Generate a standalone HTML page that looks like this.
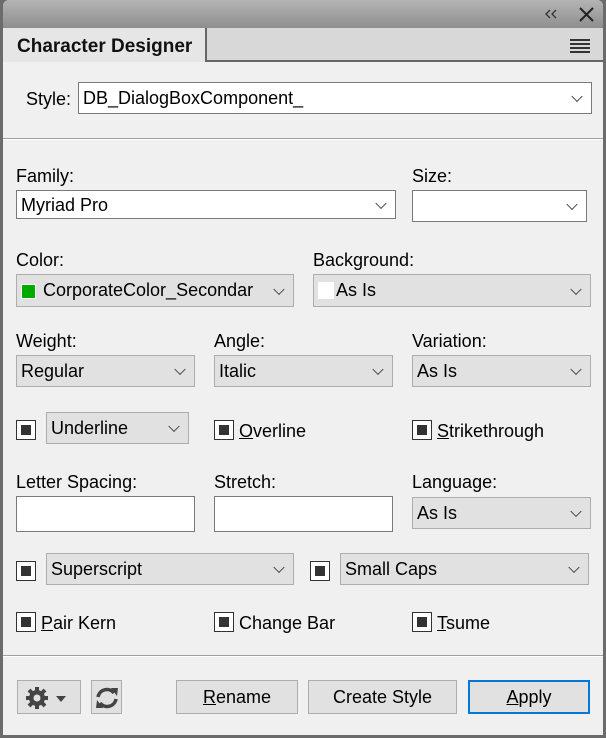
<!DOCTYPE html>
<html><head><style>
*{box-sizing:border-box;margin:0;padding:0}
body{width:606px;height:738px;background:#6b6b6b;font-family:"Liberation Sans",sans-serif;font-size:18px;color:#000;position:relative;overflow:hidden}
.win{position:absolute;left:3px;top:0;width:600px;height:735px;background:#f0f0f0;border-radius:6px 6px 0 0;overflow:hidden}
.title{position:absolute;left:0;top:0;width:600px;height:28px;background:linear-gradient(#b4b4b4,#8e8e8e)}
.tabrow{position:absolute;left:0;top:28px;width:600px;height:34px;background:#d8d8d8}
.tab{position:absolute;left:0;top:0;width:204px;height:34px;background:#e6e6e6;border-right:2px solid #666;font-weight:bold;font-size:19px;padding:8px 0 0 14px;color:#111}
.tabline{position:absolute;left:204px;top:32px;width:396px;height:2px;background:#666}
.a{position:absolute;white-space:nowrap}
.box{position:absolute;border:1px solid #7a7a7a;background:#fff}
.sel{position:absolute;border:1px solid #adadad;background:#e1e1e1;padding:5px 0 0 4px;white-space:nowrap;overflow:hidden}
.wsel{position:absolute;border:1px solid #7a7a7a;background:#fff;padding:5px 0 0 4px;white-space:nowrap;overflow:hidden}
.chev{position:absolute;right:10px;top:50%;width:8px;height:8px;border-right:1.3px solid #444;border-bottom:1.3px solid #444;transform:translateY(-70%) rotate(45deg)}
.cb{position:absolute;width:20px;height:20px;border:1px solid #333;background:#fff}
.cb::after{content:"";position:absolute;left:4px;top:4px;width:10px;height:10px;background:#333}
.hr{position:absolute;left:0;width:600px;height:2px;border-top:1px solid #a0a0a0;background:#fff}
.btn{position:absolute;border:1px solid #adadad;background:#e1e1e1;text-align:center;padding-top:6px}
u{text-decoration:underline}
</style></head><body>
<div class="win">
<div class="title">
 <svg class="a" style="left:541px;top:9px" width="14" height="10"><path d="M6 1L2 5L6 9M12 1L8 5L12 9" stroke="#333" stroke-width="1.3" fill="none"/></svg>
 <svg class="a" style="left:576px;top:7px" width="15" height="15"><path d="M1 1L14 14M14 1L1 14" stroke="#222" stroke-width="2"/></svg>
</div>
<div class="tabrow"><div class="tab">Character Designer</div><div class="tabline"></div>
 <svg class="a" style="left:567px;top:11px" width="20" height="14"><path d="M0 1H20M0 5H20M0 9H20M0 13H20" stroke="#333" stroke-width="2"/></svg>
</div>

<span class="a" style="left:23px;top:89px">Style:</span>
<div class="wsel" style="left:75px;top:82px;width:514px;height:32px;padding-left:4px">DB_DialogBoxComponent_<i class="chev"></i></div>
<div class="hr" style="top:138px"></div>

<span class="a" style="left:13px;top:166px">Family:</span>
<div class="wsel" style="left:13px;top:190px;width:380px;height:29px;padding-top:4px">Myriad Pro<i class="chev"></i></div>
<span class="a" style="left:409px;top:166px">Size:</span>
<div class="wsel" style="left:409px;top:190px;width:175px;height:32px"><i class="chev"></i></div>

<span class="a" style="left:13px;top:250px">Color:</span>
<div class="sel" style="left:13px;top:274px;width:278px;height:33px;padding-left:26px">CorporateColor_Secondar<span style="position:absolute;left:4px;top:9px;width:15px;height:15px;background:#0a0;border:1px solid #fff"></span><span style="position:absolute;left:248px;top:0;width:30px;height:31px;background:#e1e1e1"></span><i class="chev"></i></div>
<span class="a" style="left:310px;top:250px">Background:</span>
<div class="sel" style="left:310px;top:274px;width:278px;height:33px;padding-left:22px">As Is<span style="position:absolute;left:4px;top:7px;width:16px;height:17px;background:#fff"></span><i class="chev"></i></div>

<span class="a" style="left:13px;top:331px">Weight:</span>
<div class="sel" style="left:13px;top:355px;width:179px;height:32px">Regular<i class="chev"></i></div>
<span class="a" style="left:211px;top:331px">Angle:</span>
<div class="sel" style="left:211px;top:355px;width:179px;height:32px">Italic<i class="chev"></i></div>
<span class="a" style="left:409px;top:331px">Variation:</span>
<div class="sel" style="left:409px;top:355px;width:179px;height:32px">As Is<i class="chev"></i></div>

<div class="cb" style="left:13px;top:420px"></div>
<div class="sel" style="left:43px;top:412px;width:143px;height:32px">Underline<i class="chev"></i></div>
<div class="cb" style="left:211px;top:420px"></div>
<span class="a" style="left:236px;top:421px"><u>O</u>verline</span>
<div class="cb" style="left:409px;top:420px"></div>
<span class="a" style="left:434px;top:421px"><u>S</u>trikethrough</span>

<span class="a" style="left:13px;top:472px">Letter Spacing:</span>
<div class="box" style="left:13px;top:496px;width:179px;height:36px"></div>
<span class="a" style="left:211px;top:472px">Stretch:</span>
<div class="box" style="left:211px;top:496px;width:179px;height:36px"></div>
<span class="a" style="left:409px;top:472px">Language:</span>
<div class="sel" style="left:409px;top:497px;width:179px;height:32px">As Is<i class="chev"></i></div>

<div class="cb" style="left:13px;top:561px"></div>
<div class="sel" style="left:43px;top:553px;width:248px;height:32px">Superscript<i class="chev"></i></div>
<div class="cb" style="left:307px;top:561px"></div>
<div class="sel" style="left:337px;top:553px;width:249px;height:32px">Small Caps<i class="chev"></i></div>

<div class="cb" style="left:13px;top:612px"></div>
<span class="a" style="left:38px;top:613px"><u>P</u>air Kern</span>
<div class="cb" style="left:211px;top:612px"></div>
<span class="a" style="left:236px;top:613px">Change Bar</span>
<div class="cb" style="left:409px;top:612px"></div>
<span class="a" style="left:434px;top:613px"><u>T</u>sume</span>

<div class="hr" style="top:655px"></div>

<div class="btn" style="left:14px;top:680px;width:64px;height:34px">
 <svg class="a" style="left:6px;top:5px" width="50" height="24"><g transform="translate(13,12)" fill="#444"><circle r="8"/><g stroke="#444" stroke-width="4"><path d="M0-11V11M-11 0H11M-8-8L8 8M8-8L-8 8"/></g><circle r="3.5" fill="#e1e1e1"/></g><path d="M32 10H42L37 16Z" fill="#444"/></svg>
</div>
<div class="btn" style="left:88px;top:680px;width:31px;height:34px">
 <svg class="a" style="left:2px;top:4px" width="26" height="26"><g fill="none" stroke="#444" stroke-width="3.5"><path d="M4 12A9 9 0 0 1 20 8"/><path d="M22 14A9 9 0 0 1 6 18"/></g><path d="M17 3L24 3L23 11Z" fill="#444"/><path d="M9 23L2 23L3 15Z" fill="#444"/></svg>
</div>
<div class="btn" style="left:173px;top:680px;width:122px;height:34px"><u>R</u>ename</div>
<div class="btn" style="left:305px;top:680px;width:149px;height:34px">Create Style</div>
<div class="btn" style="left:465px;top:680px;width:122px;height:34px;border:2px solid #0078d7;padding-top:5px"><u>A</u>pply</div>
</div>
</body></html>
